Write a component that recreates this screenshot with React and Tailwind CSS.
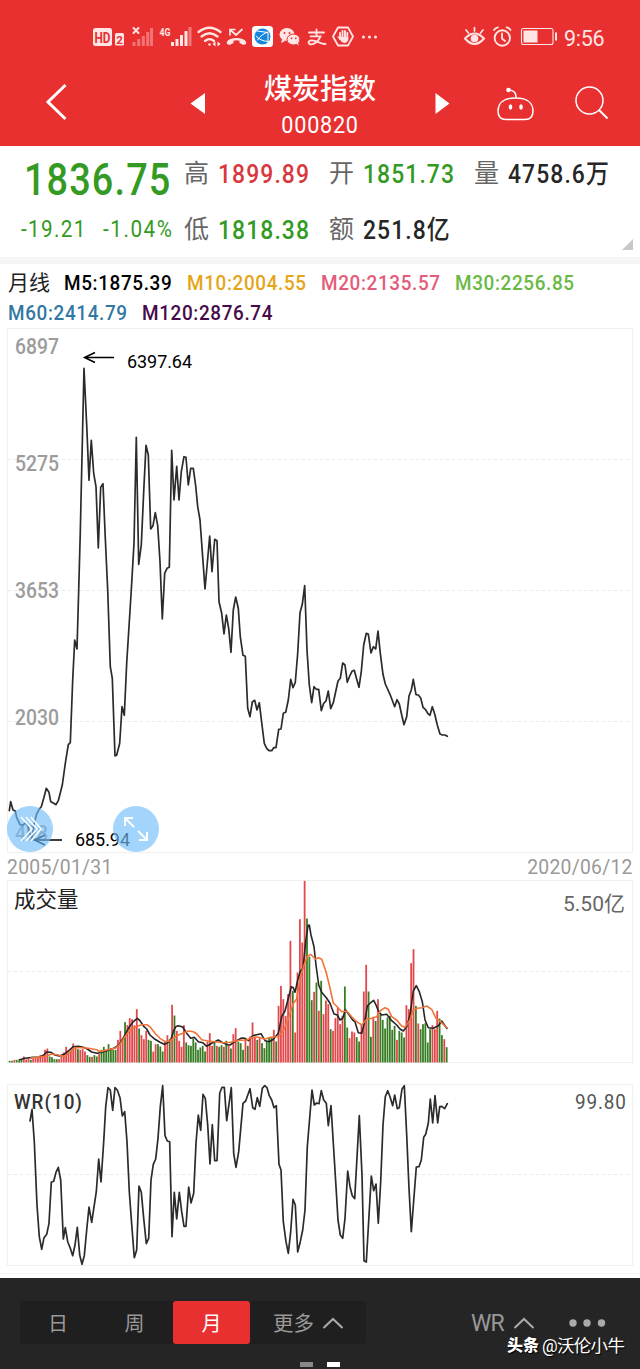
import React from 'react';

const PRICE_EARLY = '28,662 32,635 39,660 46,663 50,683 60,704 67,706 76,700 82,704 89,728 96,748 100,712 103,700 110,672 118,657 124,650 132,622 139,595 147,607 152,635 160,639 168,644 175,632 187,585 196,520 205,464 211,458 218,270 224,150 231,177 236,0 241,-175 252,-665 260,-495 267,-329 274,-449 281,-350 288,-310 295,-126 302,-308 309,-319 316,-155 323,0 331,230 337,265 345,498 350,495 359,460 366,350 373,376 380,220 394,0 402,-140 409,-458 416,-77 424,-135 431,-295 438,-434 445,-405 449,-275 452,-183 459,-193 466,-232 473,-193 480,-85 487,87 494,-50 501,-65 508,-68 515,-419 522,-270 530,-371 537,-270 544,-355 552,-400 558,-398';
const PRICE_LATE = '18,83 25,165 32,115 40,115 47,168 53,230 60,270 67,365 75,477 89,318 96,425 104,328 111,332 117,515 125,550 132,612 139,555 146,595 153,667 160,540 167,501 175,535 181,620 189,676 196,679 203,835 210,860 217,816 224,811 231,840 238,818 246,885 253,940 260,955 267,962 275,962 281,953 288,953 296,898 303,897 310,850 317,847 325,810 332,748 339,773 346,757 353,670 360,548 367,523 374,467 381,660 388,765 395,818 402,770 409,778 416,778 424,842 431,820 438,813 445,783 452,836 460,818 474,753 481,745 488,699 495,705 502,757 509,738 516,724 523,721 530,748 537,772 544,724 551,645 559,610 565,612 573,669 580,650 587,657 594,603 601,670 609,733 616,762 630,793 644,830 651,809 658,822 665,855 672,884 680,860 687,798 694,780 700,748 708,794 715,795 722,804 729,832 736,838 743,850 750,856 757,830 764,852 772,885 780,912 787,915 795,915 802,919';

const shift = (pts, dx, dy) =>
  pts
    .trim()
    .split(/\s+/)
    .map((p) => {
      const [x, y] = p.split(',').map(Number);
      return `${(x / 3 + dx).toFixed(1)},${(y / 3 + dy).toFixed(1)}`;
    })
    .join(' ');

const pricePoints = shift(PRICE_EARLY, 0, 262) + ' ' + shift(PRICE_LATE, 180, 102);

const VOL_EARLY =
  '5g 5g 8r 8g 6g 8g 18r 9r 12r 8g 12r 14r 14r 22r 18r 38r 42r 18g 16g 10g 10g 10r 20r 30r 47r 30r 40r 57r 43r 40g 38r 40r 33r 22g 17g 17r 22g 18g 26r 38g 47g 38g 55g 42g 38g 38g 68r 95r 70r 121g 112r 133r 130r 112r 160r 102g 82r 70r 95r 68g 65g 33r 55r 55g 48g 33g 65r 82r 70g 173r 141g 95r 65r 47r 112r 60g 52g 50g 72g 60g 38g 45g 50g 33g 62r 88r 50r 62g 50r 47g 52g 47r 65g 50r 42g 85r 103r';
const VOL_LATE =
  '62g 58g 38g 72r 50g 78r 120r 75r 68g 75r 58g 43g 65g 75g 75g 98r 63g 170r 230r 190r 140r 205r 365r 215g 90r 270r 430r 360r 545r 432g 317g 187g 212r 240g 155r 245g 145r 186r 175r 100g 95r 133r 165r 115r 140r 228g 105g 73r 93r 90r 76g 63g 115r 213r 293r 213g 77g 137r 125g 190r 148g 128g 102g 135g 140g 98g 110g 68r 95g 90g 75g 172r 160r 298r 340r 170g 117r 100g 115g 118g 60g 100g 112r 100r 155r 132g 82g 70r 46g';

const spread = (text, from, to) => {
  const items = text.split(' ');
  return items.map((t, i) => ({
    x: (from + ((to - from) * i) / (items.length - 1)) / 3,
    h: parseInt(t, 10) / 3,
    up: t.endsWith('r'),
  }));
};
const bars = [...spread(VOL_EARLY, 29, 707), ...spread(VOL_LATE, 715, 1340)];

const MA5 =
  shift('56,555 75,550 100,547 120,546 131,540 140,531 152,532 165,540 178,543 192,538 205,528 220,515 235,514 250,517 262,522 275,531 292,535 308,531 325,526 345,518 358,508 372,485 387,457 400,440 412,430 420,437 432,455 440,462 450,480 465,493 480,502 493,508 503,503 512,495 520,470 527,455 535,452 548,456 560,475 572,490 583,487 595,500 608,503 620,514 635,505 655,495 668,503 685,510', 0, -5) +
  ' ' +
  shift('0,510 15,500 35,489 45,490 55,497 68,482 80,479 93,476 105,497 118,500 130,493 145,475 155,425 165,408 175,370 184,335 190,338 195,352 203,315 211,289 219,280 227,200 234,152 238,150 243,180 252,215 258,270 266,330 275,352 290,370 300,385 312,417 322,420 330,435 338,430 346,404 356,418 368,435 375,440 385,473 395,475 404,440 412,393 422,383 431,376 438,390 446,410 455,420 470,418 485,437 500,450 510,462 520,468 530,455 540,420 550,348 559,332 568,350 577,380 585,435 595,458 610,460 625,452 635,438 652,462', 230, -5);
const MA10 =
  shift('90,550 120,546 140,543 155,537 175,540 195,545 210,530 225,518 245,518 265,520 290,524 300,530 320,525 345,520 360,508 375,485 390,465 408,455 425,449 440,449 450,455 465,475 480,490 495,500 510,498 530,482 548,475 565,468 580,470 590,476 605,494 625,498 645,500 670,503', 0, -5) +
  ' ' +
  shift('0,502 30,496 50,495 70,486 85,487 105,492 125,486 145,485 160,468 175,430 190,385 200,372 210,310 222,270 232,245 242,238 256,252 265,248 275,253 288,290 298,330 310,384 320,394 335,410 350,408 365,425 380,440 395,450 410,433 425,430 440,425 450,408 465,398 475,403 485,425 500,435 515,453 525,457 540,435 550,405 562,400 575,398 590,393 605,403 618,430 628,437 640,448 652,460', 230, -5);

const WR =
  shift('90,138 96,103 103,200 111,390 118,485 125,523 132,488 140,478 147,445 154,322 161,319 168,292 175,277 182,315 190,492 196,458 203,500 211,520 218,542 225,510 232,457 239,540 246,568 253,542 260,465 267,396 275,442 289,350 296,252 303,321 311,200 317,95 324,38 331,45 338,106 345,38 352,45 360,68 367,123 374,110 381,200 388,350 396,460 403,548 410,525 417,333 424,352 431,430 439,506 446,490 453,315 460,268 467,252 474,190 481,95 488,32 495,182 502,198 509,200 516,485 523,352 530,432 538,352 545,410 552,454 558,454 566,336 573,384 581,355 588,205 595,120 602,166 609,58 616,70 623,150 630,267 637,149 644,257 651,257 659,55 666,37 673,37 680,137', 0, -2) +
  ' ' +
  shift('4,38 11,235 18,277 26,230 39,85 47,78 60,41 68,98 75,103 82,68 89,94 97,40 104,32 111,38 118,62 125,75 132,98 139,92 147,268 153,285 160,440 168,500 175,535 182,470 189,373 196,390 203,531 211,500 218,465 225,405 232,215 246,45 253,90 260,84 267,86 274,47 281,75 289,85 295,152 303,92 317,320 324,435 331,480 338,490 345,430 353,288 360,335 367,362 374,371 388,122 396,300 402,557 409,561 424,303 431,347 438,327 445,445 452,320 459,150 466,65 473,47 480,65 488,92 494,60 502,101 508,98 516,42 523,32 530,180 537,340 544,470 559,276 567,275 574,255 581,187 587,178 595,145 601,72 608,144 615,62 623,144 629,95 635,94 644,101 652,86', 230, -2);

function StatusIcons() {
  return (
    <svg width="640" height="74" viewBox="0 0 640 74" fill="none" stroke="#ffe6e4" strokeLinecap="round" className="block">
      <rect x="93" y="28" width="19" height="18" rx="2.5" fill="#ffe6e4" stroke="none" />
      <text x="94.5" y="42.500" textLength="16" lengthAdjust="spacingAndGlyphs" fontSize="15" fontWeight="700" fill="#e93030" stroke="none">HD</text>
      <rect x="115" y="33" width="9" height="12.5" rx="1.5" fill="#ffe6e4" stroke="none" />
      <text x="116.3" y="43.5" fontSize="11.5" fontWeight="700" fill="#e93030" stroke="none">2</text>
      <path d="M133.5 28l5 5M138.5 28l-5 5" strokeWidth="2" />
      <g strokeLinecap="butt" strokeWidth="3">
        <path d="M134 46v-4M138.700 46v-7M143.300 46v-10M147.700 46v-14M151.500 46v-18" opacity="0.38" />
        <path d="M172.500 46v-4M177 46v-7M181.500 46v-11M186 46v-15" />
        <path d="M190 46v-19" opacity="0.4" />
      </g>
      <text x="159.500" y="35.500" textLength="11" lengthAdjust="spacingAndGlyphs" fontSize="11" fontWeight="700" fill="#ffe6e4" stroke="none">4G</text>
      <g strokeWidth="2.300">
        <path d="M198.500 32q11-8.500 22 0M201.500 36.500q8-6.500 16 0M205 41q4.500-3.800 9 0" />
        <circle cx="209.500" cy="44.500" r="1.200" fill="#ffe6e4" stroke="none" />
      </g>
      <path d="M215.500 41.500l-3 2.500 3 2.500zM217.500 41.500l3 2.500-3 2.500z" fill="#ffe6e4" stroke="none" />
      <path d="M230 35v-5.500h5M230.500 30l5.500 5 6-5.500" strokeWidth="1.700" />
      <path d="M227 44c-1.500-4 5-6 9.500-6s11 2 9.500 6l-2.500 1-4-2v-2.300c-2-.7-4-.7-6 0v2.300l-4 2z" fill="#ffe6e4" stroke="none" />
      <rect x="252" y="26" width="21" height="21" rx="3.500" fill="#fff" stroke="none" />
      <circle cx="262.500" cy="36.500" r="8" fill="#1686dc" stroke="none" />
      <path d="M257 31l11 1.500v10M257.500 40q4-6 10.500-8M256 36q4 5 12 5.500" stroke="#fff" strokeWidth="1" />
      <g stroke="none" fill="#ffe6e4">
        <ellipse cx="287" cy="34.500" rx="7.500" ry="6.500" />
        <path d="M282 39l-.8 4 4-2z" />
        <ellipse cx="293.500" cy="39.500" rx="6.500" ry="5.500" stroke="#e93030" strokeWidth="1" />
        <path d="M296 43l2.500 2.500-.5-4z" />
        <g fill="#e93030"><circle cx="284.500" cy="33" r="1" /><circle cx="289.500" cy="33" r="1" /><circle cx="291.500" cy="38.300" r=".9" /><circle cx="295.800" cy="38.300" r=".9" /></g>
      </g>
      <path d="M309 32.500h15M316.500 29.500v6.500M310.500 36.300h10q-2.500 5.500-6.500 7.300c-4 1.700-6.500-.3-5-2.200 2-2.400 7-.4 10 1 2 1 4 1.600 6.500 1.600" strokeWidth="1.800" />
      <path d="M338 27.500h10l5 9-5 9h-10l-5-9z" strokeWidth="1.800" strokeLinejoin="round" />
      <path d="M340 39v-6M342.500 38v-7M345 38v-7M347.300 39v-6" strokeWidth="1.900" />
      <path d="M339 37h9.200v3q-1 3-4 3-2.500 0-4-3l-3-3 1-.8z" fill="#ffe6e4" stroke="none" />
      <g fill="#ffe6e4" stroke="none"><circle cx="363.500" cy="37" r="1.500" /><circle cx="369.500" cy="37" r="1.500" /><circle cx="375.500" cy="37" r="1.500" /></g>
      <path d="M465 38.500q9.500-10 19 0-9.500 11-19 0z" strokeWidth="2" />
      <circle cx="474.500" cy="38.500" r="3.800" fill="#ffe6e4" stroke="none" />
      <path d="M474.500 31v-3.500M468.500 33l-2.500-3M480.500 33l2.500-3" strokeWidth="1.700" />
      <circle cx="502.300" cy="38" r="7.700" strokeWidth="1.900" />
      <path d="M502 33.500v5l3 2.500M494 30q1.500-2.500 4-2.700M510.500 30q-1.500-2.500-4-2.700" strokeWidth="1.800" />
      <rect x="521.500" y="28.500" width="31.500" height="16" rx="2" strokeWidth="1.100" />
      <rect x="523.500" y="30.500" width="14" height="12" fill="#ffe6e4" stroke="none" />
      <path d="M556 32.500v8" strokeWidth="2" strokeLinecap="butt" />
      <text x="564" y="45.500" textLength="40.500" fontSize="21.500" fill="#ffe6e4" stroke="none">9:56</text>
    </svg>
  );
}

function Header() {
  return (
    <header className="h-[146px] bg-[#e93030] text-white">
      <StatusIcons />
      <div className="flex h-[72px]">
        <svg width="264" height="72" className="block shrink-0">
          <path d="M65.500 11L48 28l17.500 17" fill="none" stroke="#fff" strokeWidth="3" />
          <path d="M190.500 29.500L205 19v21z" fill="#fff" />
        </svg>
        <div className="flex w-[112px] shrink-0 flex-col items-center whitespace-nowrap">
          <div className="h-[36px] pt-[2px] text-[28px] leading-[28px] font-medium">煤炭指数</div>
          <div className="h-6 origin-center scale-x-[0.92] pt-[3px] text-[23.500px] leading-[24px] tracking-[0.8px]">000820</div>
        </div>
        <svg width="264" height="72" viewBox="376 74 264 72" className="block shrink-0" fill="none" stroke="#fff">
          <path d="M435.500 93v21l14-10.500z" fill="#fff" stroke="none" />
          <path d="M516 98h-1c-11 0-17 5-17 13 0 6 3 8.500 8 8.500h19c5 0 8-2.500 8-8.500 0-8-6-13-17-13zV96q-.5-6-8-6" strokeWidth="1.500" />
          <circle cx="508.500" cy="90" r="2.300" fill="#fff" stroke="none" />
          <ellipse cx="510.500" cy="107" rx="1.800" ry="2.800" fill="#fff" stroke="none" />
          <ellipse cx="521" cy="107" rx="1.800" ry="2.800" fill="#fff" stroke="none" />
          <circle cx="589.500" cy="100.500" r="13.500" strokeWidth="1.500" />
          <path d="M599 110l8.500 8.500" strokeWidth="2" />
        </svg>
      </div>
    </header>
  );
}

function Stat({ label, value, color, wide }) {
  return (
    <div className={`flex h-[56px] shrink-0 items-center whitespace-nowrap ${wide ? 'w-[150px]' : 'w-[145px]'}`}>
      <span className="w-[34px] shrink-0 text-[25px] text-[#666]">{label}</span>
      <span className={`origin-left scale-x-[0.88] text-[26px] font-medium tracking-[1.25px] ${color}`}>{value}</span>
    </div>
  );
}

function Quote() {
  return (
    <section className="flex h-[111px] bg-white">
      <div className="w-[184px] shrink-0 whitespace-nowrap pt-[11px] text-[#349a24]">
        <div className="ml-[24px] h-[47px] origin-left scale-x-[0.86] text-[44px] leading-[47px] font-medium tracking-[1.300px]">1836.75</div>
        <div className="flex h-[53px] items-center pl-[21px] text-[23px]">
          <span className="w-[82px] shrink-0 origin-left scale-x-[0.9] tracking-[1.500px]">-19.21</span>
          <span className="origin-left scale-x-[0.9] tracking-[1.700px]">-1.04%</span>
        </div>
      </div>
      <div className="w-[440px] shrink-0">
        <div className="flex">
          <Stat label="高" value="1899.89" color="text-[#d9383c]" />
          <Stat label="开" value="1851.73" color="text-[#349a24]" />
          <Stat label="量" value="4758.6万" color="text-[#262626]" wide />
        </div>
        <div className="flex">
          <Stat label="低" value="1818.38" color="text-[#349a24]" />
          <Stat label="额" value="251.8亿" color="text-[#262626]" />
        </div>
      </div>
      <svg width="11" height="11" className="mt-[93px] ml-[-2px] shrink-0"><path d="M11 0v11H0z" fill="#c8c8c8" /></svg>
    </section>
  );
}

function Average({ text, color }) {
  return (
    <span className={`w-[134px] shrink-0 origin-left scale-x-[0.9] tracking-[0.700px] ${color}`}>{text}</span>
  );
}

function Averages() {
  return (
    <section className="h-[64px] bg-white pt-[2px] pl-2 text-[21px] font-medium whitespace-nowrap">
      <div className="flex h-[35px] items-center">
        <span className="w-[56px] shrink-0 font-normal text-[#222]">月线</span>
        <div className="w-[123px] shrink-0"><Average text="M5:1875.39" color="inline-block text-black" /></div>
        <Average text="M10:2004.55" color="text-[#e5a519]" />
        <Average text="M20:2135.57" color="text-[#e35d7a]" />
        <Average text="M30:2256.85" color="text-[#69b944]" />
      </div>
      <div className="flex h-[26px] items-center">
        <Average text="M60:2414.79" color="text-[#3377a3]" />
        <Average text="M120:2876.74" color="text-[#470a4b]" />
      </div>
    </section>
  );
}

const axis = [
  ['6897', 25.5],
  ['5275', 143],
  ['3653', 270],
  ['2030', 397],
  ['408', 513],
];

function PriceChart() {
  return (
    <svg width="640" height="526" viewBox="0 0 640 526" className="block">
      <rect x="7.500" y="0.500" width="625" height="524" fill="none" stroke="#f0f0f0" />
      <path d="M8 131.500h624M8 262.500h624M8 393.500h624" stroke="#e9e9e9" strokeDasharray="3 3" />
      {axis.map(([t, y]) => (
        <text key={t} x="15" y={y} textLength={t.length * 11} lengthAdjust="spacingAndGlyphs" fontSize="21.500" fontWeight="500" fill="#9c9c9c">{t}</text>
      ))}
      <polyline points={pricePoints} fill="none" stroke="#2b2b2b" strokeWidth="1.700" strokeLinejoin="round" strokeLinecap="round" />
      <path d="M114 29.500H85M95 24.500l-10.500 5 10.500 5M62 512H35M45 507l-10.500 5 10.500 5" fill="none" stroke="#000" strokeWidth="1.500" />
      <text x="127" y="40" textLength="65" fontSize="18" fill="#000">6397.64</text>
      <text x="75" y="517.500" textLength="55" fontSize="18" fill="#000">685.94</text>
      <circle cx="30" cy="501" r="23" fill="#72bffa" fillOpacity="0.65" />
      <circle cx="136" cy="501" r="23" fill="#72bffa" fillOpacity="0.65" />
      <path d="M21 489l11 12-11 12M26 489l11 12-11 12M31 489l10 12-10 12" fill="none" stroke="#fff" strokeWidth="1.500" />
      <path d="M134 499l-9-9M125 498v-8h8M138 503l9 9M147 504v8h-8" fill="none" stroke="#fff" strokeWidth="1.900" />
    </svg>
  );
}

function VolumeChart() {
  return (
    <svg width="640" height="190" viewBox="0 0 640 190" className="block">
      <rect x="7.500" y="0.500" width="625" height="182" fill="none" stroke="#f0f0f0" />
      <path d="M8 91.500h624" stroke="#e9e9e9" strokeDasharray="3 3" />
      <text x="14" y="27" fontSize="21.500" fill="#222">成交量</text>
      <text x="563" y="31" textLength="62" fontSize="21" fill="#666">5.50亿</text>
      {bars.map((b, i) => (
        <rect key={i} x={b.x - 0.9} y={182.5 - b.h} width="1.800" height={b.h} fill={b.up ? '#e2484b' : '#367d24'} />
      ))}
      <polyline points={MA5} fill="none" stroke="#262626" strokeWidth="1.600" strokeLinejoin="round" />
      <polyline points={MA10} fill="none" stroke="#f17438" strokeWidth="1.600" strokeLinejoin="round" />
    </svg>
  );
}

function WrChart() {
  return (
    <svg width="640" height="194" viewBox="0 7 640 194" className="block">
      <path d="M7.500 7.500h625v181H7.500z" fill="none" stroke="#f0f0f0" />
      <path d="M8 97.500h624" stroke="#e9e9e9" strokeDasharray="3 3" />
      <path d="M0 196.500h640" stroke="#f4f4f4" />
      <g transform="translate(14 32) scale(0.9 1)">
        <text textLength="75.500" fontSize="21" fontWeight="500" fill="#333">WR(10)</text>
      </g>
      <g transform="translate(575 32) scale(0.9 1)">
        <text textLength="56.500" fontSize="21" fill="#555">99.80</text>
      </g>
      <polyline points={WR} fill="none" stroke="#2b2b2b" strokeWidth="1.700" strokeLinejoin="round" strokeLinecap="round" />
    </svg>
  );
}

function Chevron() {
  return (
    <svg width="20" height="12" className="shrink-0"><path d="M0.500 11L10 2l9.500 9" fill="none" stroke="#aaa" strokeWidth="2" /></svg>
  );
}

function Footer() {
  return (
    <footer className="h-[91px] bg-[#252525] pt-[23px] text-[20px] text-[#999]">
      <div className="flex h-[43px] items-center whitespace-nowrap">
        <div className="ml-5 flex h-[43px] w-[346px] shrink-0 items-center rounded-sm bg-[#1f1f1f]">
          <span className="w-[76px] pt-[3px] text-center">日</span>
          <span className="w-[77px] pt-[3px] text-center">周</span>
          <span className="flex h-[43px] w-[77px] items-center justify-center rounded-[3px] bg-[#e93030] pt-[3px] text-white">月</span>
          <span className="ml-[23px] w-[50px] pt-[3px] text-[20.500px]">更多</span>
          <Chevron />
        </div>
        <span className="ml-[105px] w-[43px] pt-[3px] text-[23px] tracking-[-1px]">WR</span>
        <Chevron />
        <svg width="40" height="10" className="ml-[34px] shrink-0" fill="#aaa"><circle cx="5" cy="5" r="3.700" /><circle cx="19" cy="5" r="3.700" /><circle cx="33.500" cy="5" r="3.700" /></svg>
      </div>
      <div className="mt-[-8px] flex h-[20px] items-center pl-[507px] text-[17.500px] whitespace-nowrap text-white [text-shadow:1px_1px_1px_#000]">
        <b className="w-[35px] text-[16px] font-black">头条</b>
        <span className="tracking-[-0.7px]">@沃伦小牛</span>
      </div>
      <div className="mt-[6px] flex gap-[14px] pl-[300px]">
        <span className="h-[5px] w-[13px] bg-[#888]" />
        <span className="h-[5px] w-[13px] bg-white" />
      </div>
    </footer>
  );
}

export default function App() {
  return (
    <main className="h-[1369px] w-[640px] overflow-hidden bg-white font-['Roboto','Noto_Sans_CJK_SC',sans-serif]">
      <Header />
      <Quote />
      <div className="h-[7px] bg-[#f5f5f5]" />
      <Averages />
      <PriceChart />
      <div className="flex h-[26px] items-center justify-between bg-white pt-px pr-[7px] pl-[7px] text-[21px] text-[#999]">
        <span className="origin-left scale-x-[0.92] tracking-[0.300px]">2005/01/31</span>
        <span className="origin-right scale-x-[0.92] tracking-[0.300px]">2020/06/12</span>
      </div>
      <VolumeChart />
      <div className="h-[14px]" />
      <WrChart />
      <Footer />
    </main>
  );
}
